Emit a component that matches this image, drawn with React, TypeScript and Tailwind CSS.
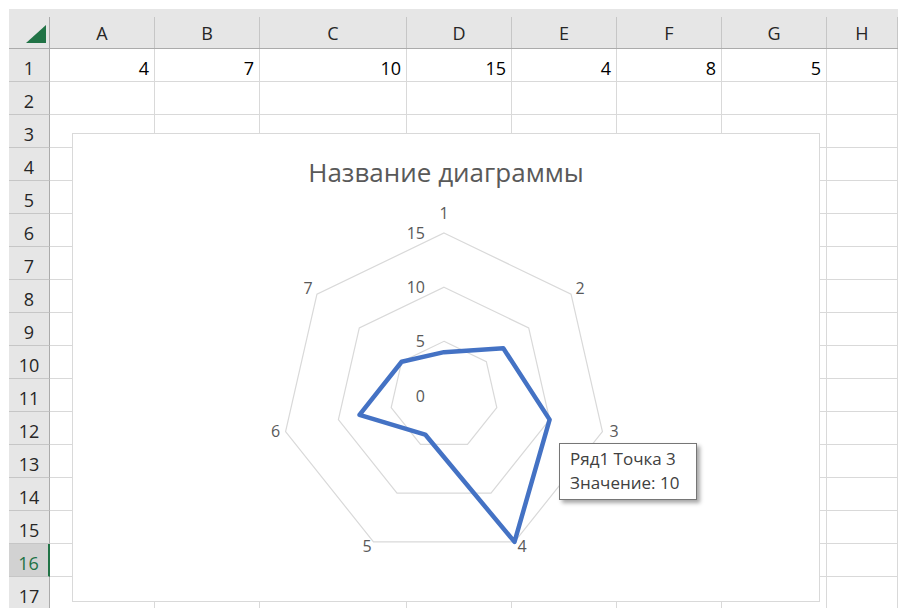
import React from "react";

const columns = ["A", "B", "C", "D", "E", "F", "G", "H"];
const widths = ["105px", "105px", "147px", "105px", "105px", "105px", "105px", "auto"];
const values = [4, 7, 10, 15, 4, 8, 5];
const rows = Array.from({ length: 17 }, (_, i) => i + 1);
const SELECTED_ROW = 16;

// radar geometry, in page pixels
const CX = 444;
const CY = 395.5;
const RADIUS = 162.5;
const MAX = 15;

function point(k: number, v: number) {
  const a = -Math.PI / 2 + (k * 2 * Math.PI) / 7;
  const r = (v / MAX) * RADIUS;
  return [CX + r * Math.cos(a), CY + r * Math.sin(a)];
}

function ring(v: number) {
  return Array.from({ length: 7 }, (_, k) => point(k, v).join(",")).join(" ");
}

const axisLabels = [
  { t: "1", x: 444, y: 212.5 },
  { t: "2", x: 580, y: 288 },
  { t: "3", x: 614, y: 431 },
  { t: "4", x: 522, y: 546 },
  { t: "5", x: 367, y: 546 },
  { t: "6", x: 275.5, y: 431 },
  { t: "7", x: 308, y: 288 },
];

function Corner() {
  return (
    <div className="flex h-full bg-[#e6e6e6] border-b border-[#ababab]">
      <div className="flex-1 flex items-end justify-end pb-[5px] pr-[3px]">
        <svg width="20" height="18" viewBox="0 0 20 18">
          <polygon points="0,18 20,18 20,0" fill="#217346" />
        </svg>
      </div>
      <div className="w-px mt-2 bg-[#ababab]" />
    </div>
  );
}

function ColumnHeader({ label }: { label: string }) {
  return (
    <div className="flex h-full bg-[#e6e6e6] border-b border-[#ababab]">
      <div className="flex-1 flex items-end justify-center pb-[5px] leading-[20px] text-[#262626]">
        {label}
      </div>
      <div className="w-px mt-2 bg-[#c6c6c6]" />
    </div>
  );
}

function RowHeader({ n }: { n: number }) {
  const selected = n === SELECTED_ROW;
  return (
    <div
      className={
        selected
          ? "flex items-end justify-center pb-[3px] leading-[20px] bg-[#d2d2d2] text-[#217346] border-b border-[#c6c6c6] border-r-2 border-r-[#217346]"
          : "flex items-end justify-center pb-[3px] leading-[20px] bg-[#e6e6e6] text-[#262626] border-b border-[#c6c6c6] border-r border-r-[#ababab]"
      }
    >
      {n}
    </div>
  );
}

function Cell({ value }: { value?: number }) {
  return (
    <div className="flex items-end justify-end pb-[3px] pr-[5px] leading-[20px] text-black border-r border-b border-[#d9d9d9]">
      {value}
    </div>
  );
}

function RadarChart() {
  const series = values.map((v, k) => point(k, v).join(",")).join(" ");
  return (
    <div className="absolute left-[72px] top-[133px] w-[748px] h-[469px] border border-[#d9d9d9] bg-white">
      <div className="pt-[25px] text-center text-[26px] leading-[26px] text-[#595959]">
        Название диаграммы
      </div>
      <svg
        className="absolute inset-0"
        width="746"
        height="467"
        viewBox="73 134 746 467"
      >
        {[5, 10, 15].map((v) => (
          <polygon key={v} points={ring(v)} fill="none" stroke="#d9d9d9" strokeWidth="1.2" />
        ))}
        <polygon
          points={series}
          fill="none"
          stroke="#4472c4"
          strokeWidth="4.5"
          strokeLinejoin="round"
        />
        {[0, 5, 10, 15].map((v) => (
          <text
            key={v}
            x="425"
            y={CY - (v / MAX) * RADIUS}
            textAnchor="end"
            dominantBaseline="central"
            className="fill-[#595959] text-[16px]"
          >
            {v}
          </text>
        ))}
        {axisLabels.map((l) => (
          <text
            key={l.t}
            x={l.x}
            y={l.y}
            textAnchor="middle"
            dominantBaseline="central"
            className="fill-[#595959] text-[16px]"
          >
            {l.t}
          </text>
        ))}
      </svg>
    </div>
  );
}

function Tooltip() {
  return (
    <div className="absolute left-[559px] top-[443px] w-[138px] h-[57px] border border-[#767676] bg-white pl-[10px] pt-[3px] text-[17px] leading-[24px] text-[#404040] shadow-[3px_3px_4px_rgba(0,0,0,0.35)]">
      <div>Ряд1 Точка 3</div>
      <div>Значение: 10</div>
    </div>
  );
}

export default function App() {
  return (
    <div className="relative w-[898px] h-[608px] overflow-hidden bg-white pt-[9px] pl-[9px] font-['Open_Sans',sans-serif] text-[18px]">
      <div className="grid grid-cols-[41px_105px_105px_147px_105px_105px_105px_105px_1fr] grid-rows-[40px_repeat(17,33px)]">
        <Corner />
        {columns.map((c) => (
          <ColumnHeader key={c} label={c} />
        ))}
        {rows.map((n) => (
          <React.Fragment key={n}>
            <RowHeader n={n} />
            {widths.map((_, i) => (
              <Cell key={i} value={n === 1 ? values[i] : undefined} />
            ))}
          </React.Fragment>
        ))}
      </div>
      <RadarChart />
      <Tooltip />
    </div>
  );
}
